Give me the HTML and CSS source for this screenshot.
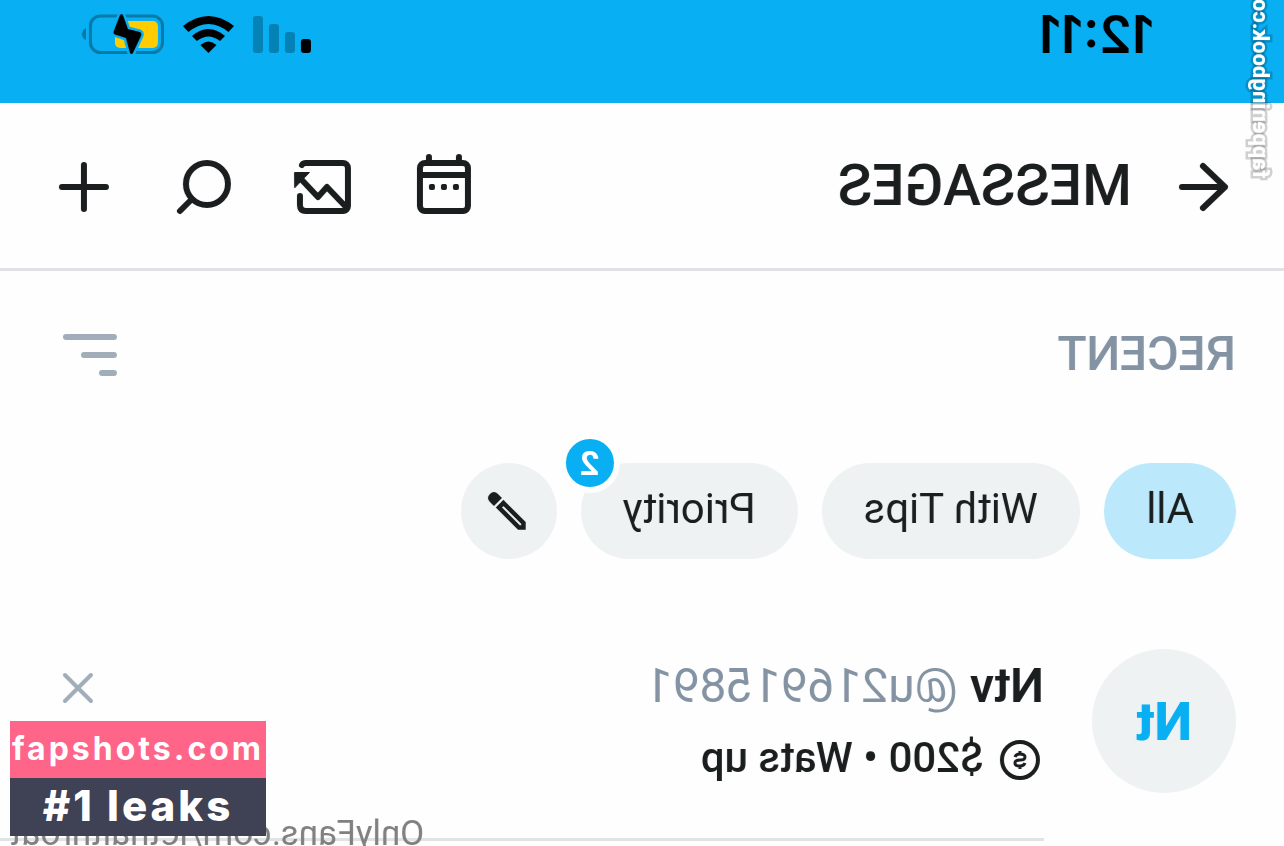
FILE: index.html
```html
<!DOCTYPE html>
<html lang="en">
<head>
<meta charset="utf-8">
<meta name="viewport" content="width=device-width, initial-scale=1">
<title>Messages</title>
<link rel="stylesheet" href="styles.css">
</head>
<body>
<div class="screen">
  <div class="status-bar">
    <span class="time">12:11</span>
    <div class="status-icons">
      <svg width="59" height="40" viewBox="0 0 59 40"><rect x="1" y="25" width="10" height="14" rx="3"/><g opacity=".25"><rect x="17" y="18" width="10" height="21" rx="3"/><rect x="33" y="10" width="10" height="29" rx="3"/><rect x="49" y="2" width="10" height="37" rx="3"/></g></svg>
      <svg width="51" height="40" viewBox="0 0 51 40"><path d="M0 12Q25.500-8 51 12L45.500 18Q25.500 2 5.500 18Z"/><path d="M9 22Q25.500 8 42 22L37 27Q25.500 18 14 27Z"/><path d="M17.500 31Q25.500 24 33.500 31L25.500 39Z"/></svg>
      <svg width="82" height="40" viewBox="0 0 82 40"><rect x="1.500" y="2" width="72" height="36.500" rx="10" fill="none" stroke="#087aa8" stroke-width="3"/><path d="M78 14q4 2 4 6t-4 6z" fill="#087aa8"/><rect x="6" y="7" width="43" height="27" rx="5" fill="#fc0"/><path d="M44 1 50.500 18q0 2-1.500 2.500L38 24 34 39q-2 2-3 0L23 22q-1-3 1-4l12-3L41 1q1-2 3 0z" stroke="#08aff3" stroke-width="5" paint-order="stroke" stroke-linejoin="round" class="bolt"/></svg>
    </div>
  </div>

  <header class="header">
    <button class="icon-button" aria-label="Back"><svg class="line" width="72" height="72" viewBox="0 0 72 72"><path d="M54 36H11M33 15 11 36l22 21"/></svg></button>
    <h1 class="title">MESSAGES</h1>
    <div class="actions">
      <button class="icon-button" aria-label="Calendar"><svg class="line" width="72" height="72" viewBox="0 0 72 72"><rect x="12" y="12" width="48" height="48" rx="5"/><path d="M12 24H60M21 6v6M51 6v6"/><g class="solid"><rect x="21.500" y="33.500" width="5" height="5" rx="1"/><rect x="33.500" y="33.500" width="5" height="5" rx="1"/><rect x="45.500" y="33.500" width="5" height="5" rx="1"/></g></svg></button>
      <button class="icon-button" aria-label="Media"><svg class="line" width="72" height="72" viewBox="0 0 72 72"><path d="M58 14Q57 12 54 12H17a5 5 0 0 0-5 5V55a5 5 0 0 0 5 5H54q6 0 6-6V45M13 57 33 36l9 10L59 28"/><path class="solid" d="M65 21.500H50.500L65 36.500z"/></svg></button>
      <button class="icon-button" aria-label="Search"><svg class="line" width="72" height="72" viewBox="0 0 72 72"><circle cx="33" cy="33" r="21"/><path d="m48 48 12 12"/></svg></button>
      <button class="icon-button" aria-label="New message"><svg class="line" width="72" height="72" viewBox="0 0 72 72"><path d="M14 36H58M36 14V58"/></svg></button>
    </div>
  </header>

  <main class="content">
    <div class="section-head">
      <h2 class="section-title">RECENT</h2>
      <button class="icon-button muted" aria-label="Sort"><svg class="line" width="72" height="56" viewBox="0 0 72 56"><path d="M6 11H54M6 29H36M6 47H18"/></svg></button>
    </div>
    <nav class="filters">
      <button class="chip active">All</button>
      <button class="chip">With Tips</button>
      <button class="chip">Priority<span class="badge">2</span></button>
      <button class="chip round" aria-label="Edit"><svg width="48" height="48" viewBox="0 0 48 48"><path d="M29.500 16 9.500 36v4.500h4.500L34 20.500z" fill="none" stroke="#1b1e1f" stroke-width="4.500"/><path d="M35 7q4-4 8 0t0 8l-4 4-8-8z" fill="#1b1e1f"/></svg></button>
    </nav>
    <article class="conversation">
      <div class="avatar">Nt</div>
      <div class="summary">
        <div class="name-row">
          <div class="names"><b class="name">Ntv</b> <a class="handle" href="#">@u216915891</a></div>
          <button class="icon-button muted" aria-label="Remove"><svg class="close" width="48" height="48" viewBox="0 0 48 48"><path d="m11 13 26 26M37 13 11 39"/></svg></button>
        </div>
        <div class="message-row">
          <svg class="coin" width="40" height="40" viewBox="0 0 40 40"><circle cx="20" cy="20" r="18"/><path class="dollar" d="M25 17q-1-3-5-3-5 0-5 3t5 3 5 3-5 3q-4 0-5-3M20 11v3M20 26v3"/></svg>
          <span>$200 • Wats up</span>
        </div>
      </div>
    </article>
  </main>
  <div class="side-mark">fappeningbook.com</div>
  <div class="profile-mark">OnlyFans.com/lethalthroat</div>
</div>
<aside class="stamp"><div class="stamp-site">fapshots.com</div><div class="stamp-note">#1 leaks</div></aside>
</body>
</html>
```
FILE: styles.css
```css
* { box-sizing: border-box; }
body { margin: 0; height: 100vh; overflow: hidden; position: relative; font-family: Roboto, "Liberation Sans", sans-serif; color: #1b1e1f; background: #fefefe; }
button { border: 0; padding: 0; background: none; color: inherit; font: inherit; }
h1, h2 { margin: 0; font-weight: 500; }
svg { display: block; }
/* The whole phone screen is shown as a mirror image. */
.screen { position: relative; height: 100%; overflow: hidden; transform: scaleX(-1); }
.status-bar { display: flex; justify-content: space-between; align-items: flex-start; height: 103px; padding: 14px 82px 0 130px; background: #08aff3; color: #000; }
.time { font: 600 52px/42px Inter, sans-serif; }
.status-icons { display: flex; gap: 19px; }
.bolt { fill: #000; }
.header { display: flex; align-items: center; height: 168px; padding: 2px 48px 0; border-bottom: 3px solid #e0e2e5; }
.title { flex: 1; margin-left: 32px; font-size: 57px; line-height: 62px; padding-bottom: 2px; }
.actions { display: flex; gap: 48px; }
.line { fill: none; stroke: currentColor; stroke-width: 6; stroke-linecap: round; stroke-linejoin: round; }
.solid { fill: currentColor; stroke-width: 1; }
.muted { color: #a1adb8; }
.content { padding: 55px 0 0 48px; }
.section-head { display: flex; justify-content: space-between; padding-right: 48px; }
.section-title { font-size: 48px; line-height: 56px; color: #8493a3; }
.filters { display: flex; gap: 24px; margin-top: 81px; }
.chip { position: relative; height: 96px; padding: 0 42px 6px; border-radius: 48px; background: #eef2f3; font-size: 42px; }
.active { background: #bbe9fb; }
.round { display: grid; place-items: center; width: 96px; padding: 0; }
.badge { position: absolute; top: -30px; right: -21px; width: 60px; height: 60px; border: 6px solid #fefefe; border-radius: 50%; background: #08aff3; color: #fff; font-size: 34px; font-weight: 700; line-height: 48px; text-align: center; }
.conversation { display: flex; gap: 48px; margin-top: 90px; }
.avatar { display: grid; place-items: center; flex: none; width: 144px; height: 144px; border-radius: 50%; background: #eef2f3; color: #08aff3; font-size: 54px; font-weight: 800; }
.summary { flex: 1; padding: 9px 0 52px; border-bottom: 3px solid #e0e3e4; }
.name-row { display: flex; justify-content: space-between; padding-right: 54px; font-size: 48px; line-height: 56px; }
.name { font-weight: 600; }
.handle { color: #8493a3; text-decoration: none; }
.close { fill: none; stroke: currentColor; stroke-width: 4; stroke-linecap: round; }
.message-row { display: flex; align-items: center; gap: 16px; margin-top: 16px; padding-left: 4px; font-size: 42px; font-weight: 500; line-height: 56px; }
.coin { margin-top: 4px; fill: none; stroke: #1b1e1f; stroke-width: 4; }
.dollar { stroke-width: 3; }
.side-mark { position: absolute; left: 10px; bottom: calc(100% - 178px); writing-mode: vertical-rl; rotate: 180deg; font-size: 22px; font-weight: 800; line-height: 28px; color: #fff; -webkit-text-stroke: 5px rgb(0 0 0 / 18%); paint-order: stroke fill; }
.profile-mark { position: absolute; right: 10px; bottom: -8px; font-size: 35px; line-height: 40px; color: #808080; }
.stamp { position: absolute; left: 10px; bottom: 10px; width: 256px; color: #fff; font-family: Inter, sans-serif; font-weight: 700; letter-spacing: 3px; text-align: center; white-space: nowrap; }
.stamp-site { height: 57px; background: #ff6589; font-size: 32px; line-height: 56px; }
.stamp-note { height: 58px; background: #3f4155; font-size: 42px; font-weight: 800; line-height: 56px; }
```
